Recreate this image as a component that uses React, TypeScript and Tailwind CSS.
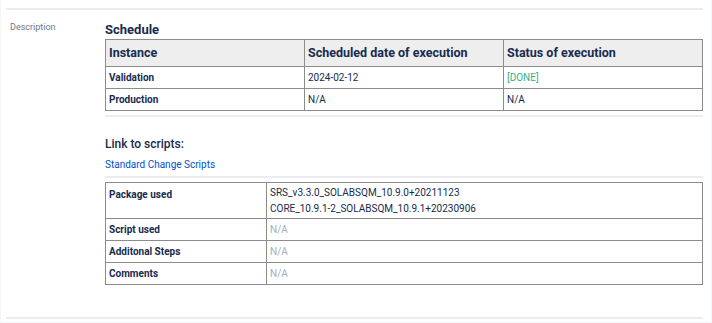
import React from "react";

const font = { fontFamily: "Roboto, 'Liberation Sans', sans-serif" };

const scheduleRows = [
  { name: "Validation", date: "2024-02-12", status: "[DONE]", done: true },
  { name: "Production", date: "N/A", status: "N/A", done: false },
];

export default function App() {
  return (
    <div
      className="min-h-[323px] w-[712px] bg-white border-x border-b border-[#f4f5f7] px-[5px] pt-2 text-[#172b4d]"
      style={font}
    >
      <div className="h-[2px] bg-[#ebecf0] mr-[3px]" />

      <div className="flex">
        {/* label column */}
        <div className="w-[99px] shrink-0 pl-[4px] pt-[11px] text-[9px] leading-[12px] text-[#6b778c]">
          Description
        </div>

        {/* content */}
        <div className="w-[598px] pt-[12px]">
          <h2 className="text-[13px] font-bold leading-[16px] mb-[1px]">Schedule</h2>

          <table className="w-full border-collapse table-fixed">
            <thead>
              <tr className="h-[27px] bg-[#eeeeee]">
                <th className="w-1/3 border border-[#8c8c8c] px-[3px] text-left text-[12.5px] font-bold">
                  Instance
                </th>
                <th className="w-1/3 border border-[#8c8c8c] px-[3px] text-left text-[12.5px] font-bold">
                  Scheduled date of execution
                </th>
                <th className="border border-[#8c8c8c] px-[3px] text-left text-[12.5px] font-bold">
                  Status of execution
                </th>
              </tr>
            </thead>
            <tbody>
              {scheduleRows.map((r) => (
                <tr key={r.name} className="h-[22px] text-[10px]">
                  <td className="border border-[#8c8c8c] px-[3px] font-bold">{r.name}</td>
                  <td className="border border-[#8c8c8c] px-[3px]">{r.date}</td>
                  <td
                    className={
                      r.done
                        ? "border border-[#8c8c8c] px-[3px] text-[#36b37e]"
                        : "border border-[#8c8c8c] px-[3px]"
                    }
                  >
                    {r.status}
                  </td>
                </tr>
              ))}
            </tbody>
          </table>

          <div className="h-[2px] bg-[#ebecf0] mt-[4px]" />

          <h3 className="mt-[19px] text-[12px] font-medium leading-[16px]">Link to scripts:</h3>
          <a href="#" className="block mt-[6px] text-[10px] leading-[14px] text-[#0052cc]">
            Standard Change Scripts
          </a>

          <div className="h-[2px] bg-[#ebecf0] mt-[4px]" />

          <table className="w-full border-collapse table-fixed mt-[4px] text-[10px]">
            <tbody>
              <tr className="h-[36px]">
                <td className="w-[161px] border border-[#8c8c8c] px-[3px] align-top pt-[4px] font-bold leading-[16px]">
                  Package used
                </td>
                <td className="border border-[#8c8c8c] px-[3px] align-top pt-[2px] leading-[16px]">
                  <div>SRS_v3.3.0_SOLABSQM_10.9.0+20211123</div>
                  <div>CORE_10.9.1-2_SOLABSQM_10.9.1+20230906</div>
                </td>
              </tr>
              {["Script used", "Additonal Steps", "Comments"].map((k) => (
                <tr key={k} className="h-[22px]">
                  <td className="border border-[#8c8c8c] px-[3px] font-bold">{k}</td>
                  <td className="border border-[#8c8c8c] px-[3px] text-[#a5adba]">N/A</td>
                </tr>
              ))}
            </tbody>
          </table>
        </div>
      </div>

      <div className="h-[2px] bg-[#ebecf0] mt-[32px] mr-[3px]" />
    </div>
  );
}
